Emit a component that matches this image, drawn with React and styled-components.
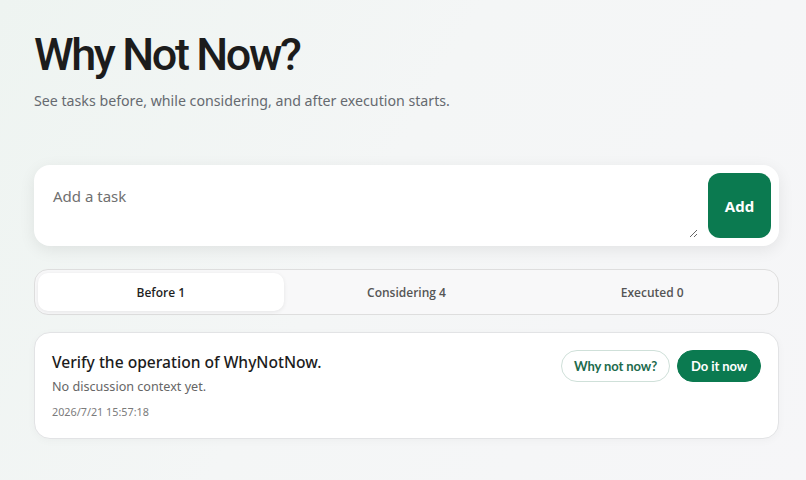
import React from "react";
import styled, { createGlobalStyle } from "styled-components";

const Global = createGlobalStyle`
  html, body { margin: 0; padding: 0; }
  body {
    font-family: "Noto Sans", "Open Sans", sans-serif;
    background: linear-gradient(120deg, #eef4f1 0%, #f4f6f6 45%, #f6f6f8 100%);
    min-height: 480px;
    color: #1f1f1f;
  }
  * { box-sizing: border-box; }
`;

const Page = styled.main`
  padding: 27px 27px 40px 34px;
  display: flex;
  flex-direction: column;
`;

const Title = styled.h1`
  margin: 0;
  font-family: "Roboto", sans-serif;
  font-size: 45px;
  font-weight: 500;
  letter-spacing: -2.4px;
  line-height: 56px;
  color: #1c1c1c;
`;

const Subtitle = styled.p`
  margin: 8px 0 0;
  font-size: 14.2px;
  line-height: 19px;
  color: #666a70;
`;

const Composer = styled.form`
  margin-top: 55px;
  background: #fff;
  border-radius: 16px;
  box-shadow: 0 4px 16px rgba(0, 0, 0, 0.08);
  display: flex;
  align-items: stretch;
  gap: 10px;
  padding: 8px 8px 8px 0;
  height: 81px;
`;

const TaskInput = styled.textarea`
  flex: 1;
  border: none;
  outline: none;
  resize: vertical;
  background: transparent;
  font-family: inherit;
  font-size: 15px;
  color: #333;
  padding: 13px 0 0 19px;
  &::placeholder { color: #707070; }
`;

const AddButton = styled.button`
  width: 63px;
  border: none;
  border-radius: 12px;
  background: #0b7a50;
  color: #fff;
  font-family: "Open Sans", sans-serif;
  font-weight: 700;
  font-size: 15px;
`;

const Tabs = styled.div`
  margin-top: 23px;
  border: 1px solid #dedede;
  border-radius: 14px;
  background: #f8f8f9;
  padding: 3px;
  display: grid;
  grid-template-columns: repeat(3, 1fr);
  height: 46px;
`;

const Tab = styled.button`
  border: none;
  border-radius: 10px;
  background: ${(p) => (p.$active ? "#fff" : "transparent")};
  box-shadow: ${(p) => (p.$active ? "0 1px 4px rgba(0,0,0,0.08)" : "none")};
  font-family: "Open Sans", sans-serif;
  font-weight: 600;
  font-size: 12px;
  color: ${(p) => (p.$active ? "#1f1f1f" : "#555")};
`;

const Card = styled.article`
  margin-top: 17px;
  background: #fff;
  border: 1px solid #e2e3e5;
  border-radius: 16px;
  padding: 17px 17px 19px 17px;
  display: flex;
  justify-content: space-between;
  align-items: flex-start;
  box-shadow: 0 2px 8px rgba(0,0,0,0.03);
`;

const CardBody = styled.div`
  display: flex;
  flex-direction: column;
`;

const CardTitle = styled.h2`
  margin: 0;
  font-size: 15.6px;
  font-weight: 500;
  color: #1c1c1c;
  line-height: 24px;
`;

const CardText = styled.p`
  margin: 4px 0 0;
  font-size: 12.6px;
  color: #666;
`;

const CardDate = styled.span`
  margin-top: 9px;
  font-size: 10.8px;
  color: #7b7b7b;
`;

const Actions = styled.div`
  display: flex;
  gap: 7px;
`;

const Pill = styled.button`
  height: 32px;
  padding: 0 ${(p) => (p.$primary ? "13px" : "12px")};
  border-radius: 16px;
  border: 1px solid ${(p) => (p.$primary ? "#0b7a50" : "#cfe0d9")};
  background: ${(p) => (p.$primary ? "#0b7a50" : "#fff")};
  color: ${(p) => (p.$primary ? "#fff" : "#1d6b4d")};
  font-family: "Lato", sans-serif;
  font-weight: 700;
  font-size: 13px;
  letter-spacing: -0.1px;
`;

export default function App() {
  return (
    <>
      <Global />
      <Page>
        <Title>Why Not Now?</Title>
        <Subtitle>See tasks before, while considering, and after execution starts.</Subtitle>
        <Composer onSubmit={(e) => e.preventDefault()}>
          <TaskInput placeholder="Add a task" />
          <AddButton type="submit">Add</AddButton>
        </Composer>
        <Tabs>
          <Tab $active>Before 1</Tab>
          <Tab>Considering 4</Tab>
          <Tab>Executed 0</Tab>
        </Tabs>
        <Card>
          <CardBody>
            <CardTitle>Verify the operation of WhyNotNow.</CardTitle>
            <CardText>No discussion context yet.</CardText>
            <CardDate>2026/7/21 15:57:18</CardDate>
          </CardBody>
          <Actions>
            <Pill>Why not now?</Pill>
            <Pill $primary>Do it now</Pill>
          </Actions>
        </Card>
      </Page>
    </>
  );
}
